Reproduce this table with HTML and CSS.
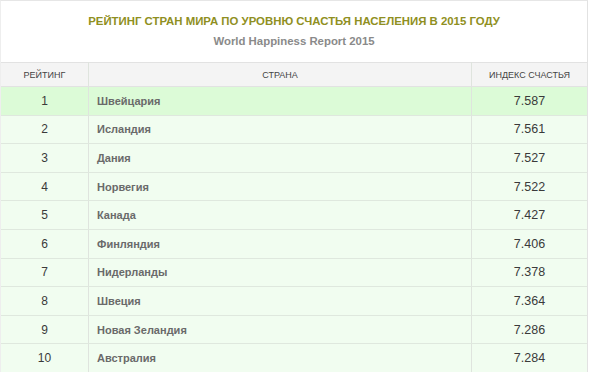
FILE: index.html
```html
<!DOCTYPE html>
<html lang="ru">
<head>
<meta charset="utf-8">
<link rel="stylesheet" href="styles.css">
</head>
<body>
<div class="wrap">
  <div class="caption">
    <div class="title">РЕЙТИНГ СТРАН МИРА ПО УРОВНЮ СЧАСТЬЯ НАСЕЛЕНИЯ В 2015 ГОДУ</div>
    <div class="subtitle">World Happiness Report 2015</div>
  </div>
  <table class="rating">
    <thead>
      <tr><th class="c-rank">РЕЙТИНГ</th><th class="c-name">СТРАНА</th><th class="c-idx">ИНДЕКС СЧАСТЬЯ</th></tr>
    </thead>
    <tbody>
      <tr class="top"><td class="c-rank">1</td><td class="c-name">Швейцария</td><td class="c-idx">7.587</td></tr>
      <tr><td class="c-rank">2</td><td class="c-name">Исландия</td><td class="c-idx">7.561</td></tr>
      <tr><td class="c-rank">3</td><td class="c-name">Дания</td><td class="c-idx">7.527</td></tr>
      <tr><td class="c-rank">4</td><td class="c-name">Норвегия</td><td class="c-idx">7.522</td></tr>
      <tr><td class="c-rank">5</td><td class="c-name">Канада</td><td class="c-idx">7.427</td></tr>
      <tr><td class="c-rank">6</td><td class="c-name">Финляндия</td><td class="c-idx">7.406</td></tr>
      <tr><td class="c-rank">7</td><td class="c-name">Нидерланды</td><td class="c-idx">7.378</td></tr>
      <tr><td class="c-rank">8</td><td class="c-name">Швеция</td><td class="c-idx">7.364</td></tr>
      <tr><td class="c-rank">9</td><td class="c-name">Новая Зеландия</td><td class="c-idx">7.286</td></tr>
      <tr><td class="c-rank">10</td><td class="c-name">Австралия</td><td class="c-idx">7.284</td></tr>
    </tbody>
  </table>
</div>
</body>
</html>
```
FILE: styles.css
```css
html, body {
  margin: 0;
  padding: 0;
  background: #ffffff;
}
body {
  font-family: "Liberation Sans", Arial, sans-serif;
}
.wrap {
  width: 588px;
  border-top: 1px solid #e6e6e6;
  border-left: 1px solid #eeeeee;
  border-right: 1px solid #e2e2e2;
  box-sizing: border-box;
}
.caption {
  height: 61px;
  box-sizing: border-box;
  padding-top: 13px;
  text-align: center;
}
.title {
  font-size: 11.4px;
  font-weight: bold;
  color: #8f8f22;
  line-height: 14px;
}
.subtitle {
  margin-top: 6px;
  font-size: 11.4px;
  font-weight: bold;
  color: #8a8a8a;
  line-height: 14px;
}
.rating {
  width: 100%;
  border-collapse: collapse;
  table-layout: fixed;
}
.rating th {
  background: #f4f4f4;
  color: #444444;
  font-weight: normal;
  font-size: 9px;
  height: 23px;
  padding: 0;
  border-top: 1px solid #e2e2e2;
  border-bottom: 1px solid #e2e2e2;
  text-align: center;
}
.rating td {
  height: 27.6px;
  padding: 0;
  background: #f1fdf0;
  border-bottom: 1px solid #dfe8de;
  font-size: 12px;
  color: #3a3a3a;
}
.rating .c-rank {
  width: 87px;
  text-align: center;
  border-right: 1px solid #dfe4de;
}
.rating .c-name {
  border-right: 1px solid #dfe4de;
}
.rating td.c-name {
  padding-left: 8px;
  font-size: 11px;
  font-weight: bold;
  color: #6a6a6a;
}
.rating td.c-idx {
  font-size: 12.5px;
}
.rating .c-idx {
  width: 115px;
  text-align: center;
}
.rating tr.top td {
  background: #dcfbd7;
}
```
